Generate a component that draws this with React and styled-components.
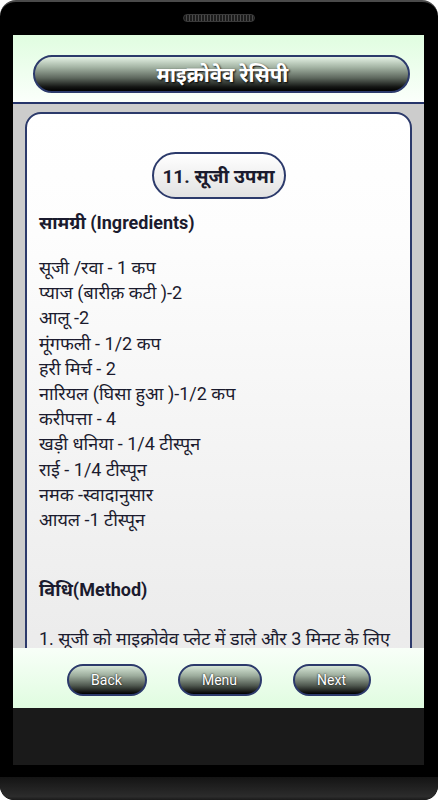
import React from 'react';
import styled, { createGlobalStyle } from "styled-components";

const GlobalStyle = createGlobalStyle`
  html, body {
    margin: 0;
    padding: 0;
    background: #ffffff;
  }
  body {
    font-family: Roboto, "Noto Sans", "DejaVu Sans", sans-serif;
  }
`

const Phone = styled.div`
  width: 438px;
  height: 800px;
  box-sizing: border-box;
  background: #000;
  border-top: 2px solid #4a4a4a;
  border-radius: 16px 16px 14px 14px;
  display: flex;
  flex-direction: column;
  overflow: hidden;
`

const TopBezel = styled.div`
  height: 33px;
  display: flex;
  justify-content: center;
  padding-top: 12px;
  box-sizing: border-box;
`

const Speaker = styled.div`
  width: 70px;
  height: 6px;
  border-radius: 4px;
  border: 1px solid #3a3a3a;
  background: repeating-linear-gradient(90deg, #1c1c1c 0 2px, #4a4a4a 2px 3px);
`

const Screen = styled.div`
  height: 673px;
  margin: 0 14px 0 13px;
  display: flex;
  flex-direction: column;
`

const Header = styled.div`
  height: 69px;
  box-sizing: border-box;
  padding: 20px 14px 0 20px;
  border-bottom: 2px solid #26346a;
  background: linear-gradient(to bottom, #e0fde0, #fbfffb);
`

const TitleBar = styled.div`
  height: 38px;
  box-sizing: border-box;
  border: 2px solid #2c3a6b;
  border-radius: 19px;
  background: linear-gradient(to bottom, #e4f2e4 0%, #a4b4a4 30%, #5d675d 62%, #141614 88%, #000 100%);
  display: flex;
  align-items: center;
  justify-content: center;
  color: #fff;
  font-size: 20.5px;
  font-weight: 700;
  text-shadow: 1px 1px 2px #000;
  padding-left: 2px;
`

const Body = styled.div`
  flex: 1;
  background: #cccccc;
  overflow: hidden;
  padding: 8px 12px 0 12px;
`

const Card = styled.div`
  border: 2px solid #2c3a6b;
  border-radius: 16px;
  background: linear-gradient(to bottom, #ffffff 0px, #fdfdfd 120px, #ececec 520px, #eaeaea 700px);
  padding: 38px 12px 40px 12px;
  color: #1b1b2e;
  font-size: 18px;
  min-height: 700px;
`

const RecipeTitle = styled.div`
  width: 134px;
  height: 47px;
  margin: 0 auto;
  box-sizing: border-box;
  border: 2px solid #2c3a6b;
  border-radius: 24px;
  background: linear-gradient(to bottom, #ffffff, #e2e2e2);
  display: flex;
  align-items: center;
  justify-content: center;
  font-weight: 700;
  font-size: 19px;
  white-space: nowrap;
`

const SectionHead = styled.div`
  font-weight: 700;
  line-height: 25px;
  margin-top: ${p => p.$gap}px;
`

const List = styled.div`
  margin-top: 20px;
  line-height: 25.2px;
`

const Step = styled.div`
  margin-top: 24px;
  line-height: 25px;
  white-space: nowrap;
`

const Footer = styled.div`
  height: 60px;
  box-sizing: border-box;
  padding-top: 4px;
  background: linear-gradient(to bottom, #f8fff8, #e0fce0);
  display: flex;
  align-items: center;
  justify-content: center;
  gap: 31px;
`

const NavButton = styled.button`
  width: ${p => p.$w}px;
  height: 32px;
  border: 2px solid #2c3a6b;
  border-radius: 16px;
  background: linear-gradient(to bottom, #d6e6d6 0%, #9cac9c 35%, #4f584f 70%, #000 100%);
  color: #fff;
  font-family: Roboto, "Noto Sans", sans-serif;
  font-size: 14px;
  text-shadow: 0 0 2px #000;
  padding: 0;
  cursor: pointer;
`

const DarkStrip = styled.div`
  height: 57px;
  margin: 0 14px 0 13px;
  background: #1a1a1a;
`

const Gap = styled.div`
  height: 12px;
`

const BottomLip = styled.div`
  height: 23px;
  border-radius: 0 0 14px 14px;
  background: linear-gradient(to bottom, #141414, #2c2c2c 85%, #1a1a1a);
`

const ingredients = [
  "सूजी /रवा - 1 कप",
  "प्याज (बारीक़ कटी )-2",
  "आलू -2",
  "मूंगफली - 1/2 कप",
  "हरी मिर्च - 2",
  "नारियल (घिसा हुआ )-1/2 कप",
  "करीपत्ता - 4",
  "खड़ी धनिया - 1/4 टीस्पून",
  "राई - 1/4 टीस्पून",
  "नमक -स्वादानुसार",
  "आयल -1 टीस्पून",
]

const App = () => {
  return (
    <>
      <GlobalStyle />
      <Phone>
        <TopBezel>
          <Speaker />
        </TopBezel>
        <Screen>
          <Header>
            <TitleBar>माइक्रोवेव रेसिपी</TitleBar>
          </Header>
          <Body>
            <Card>
              <RecipeTitle>11. सूजी उपमा</RecipeTitle>
              <SectionHead $gap={11}>सामग्री (Ingredients)</SectionHead>
              <List>
                {ingredients.map(item => (
                  <div key={item}>{item}</div>
                ))}
              </List>
              <SectionHead $gap={45}>विधि(Method)</SectionHead>
              <Step>1. सूजी को माइक्रोवेव प्लेट में डाले और 3 मिनट के लिए</Step>
            </Card>
          </Body>
          <Footer>
            <NavButton $w={80}>Back</NavButton>
            <NavButton $w={84}>Menu</NavButton>
            <NavButton $w={78}>Next</NavButton>
          </Footer>
        </Screen>
        <DarkStrip />
        <Gap />
        <BottomLip />
      </Phone>
    </>
  )
}

export default App;
